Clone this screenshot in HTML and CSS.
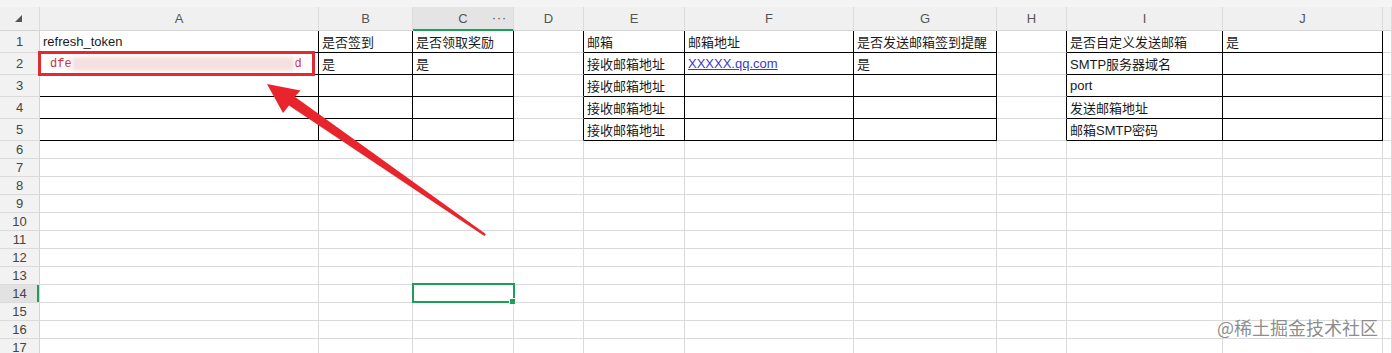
FILE: index.html
```html
<!DOCTYPE html>
<html lang="zh-CN">
<head>
  <meta charset="UTF-8">
  <title>sheet</title>
  <link rel="stylesheet" href="styles.css">
</head>
<body>
  <div class="sheet">

    <!-- column letters -->
    <div class="row head">
      <div class="c corner"><span class="tri"></span></div>
      <div class="c">A</div>
      <div class="c">B</div>
      <div class="c sel-col"><span></span><span>C</span><span class="dots">···</span></div>
      <div class="c">D</div>
      <div class="c">E</div>
      <div class="c">F</div>
      <div class="c">G</div>
      <div class="c">H</div>
      <div class="c">I</div>
      <div class="c">J</div>
      <div class="c"></div>
    </div>

    <!-- data rows -->
    <div class="row tall">
      <div class="c n">1</div>
      <div class="c k">refresh_token</div>
      <div class="c k">是否签到</div>
      <div class="c k">是否领取奖励</div>
      <div class="c kr"></div>
      <div class="c k">邮箱</div>
      <div class="c k">邮箱地址</div>
      <div class="c k">是否发送邮箱签到提醒</div>
      <div class="c kr"></div>
      <div class="c k">是否自定义发送邮箱</div>
      <div class="c k">是</div>
      <div class="c"></div>
    </div>
    <div class="row tall">
      <div class="c n">2</div>
      <div class="c k token">
        <span>dfe</span><span class="blur"></span><span>d</span>
        <div class="mark"></div>
      </div>
      <div class="c k">是</div>
      <div class="c k">是</div>
      <div class="c kr"></div>
      <div class="c k">接收邮箱地址</div>
      <div class="c k"><a class="link">XXXXX.qq.com</a></div>
      <div class="c k">是</div>
      <div class="c kr"></div>
      <div class="c k">SMTP服务器域名</div>
      <div class="c k"></div>
      <div class="c"></div>
    </div>
    <div class="row tall">
      <div class="c n">3</div>
      <div class="c k"></div>
      <div class="c k"></div>
      <div class="c k"></div>
      <div class="c kr"></div>
      <div class="c k">接收邮箱地址</div>
      <div class="c k"></div>
      <div class="c k"></div>
      <div class="c kr"></div>
      <div class="c k">port</div>
      <div class="c k"></div>
      <div class="c"></div>
    </div>
    <div class="row tall">
      <div class="c n">4</div>
      <div class="c k"></div>
      <div class="c k"></div>
      <div class="c k"></div>
      <div class="c kr"></div>
      <div class="c k">接收邮箱地址</div>
      <div class="c k"></div>
      <div class="c k"></div>
      <div class="c kr"></div>
      <div class="c k">发送邮箱地址</div>
      <div class="c k"></div>
      <div class="c"></div>
    </div>
    <div class="row tall">
      <div class="c n">5</div>
      <div class="c k"></div>
      <div class="c k"></div>
      <div class="c k"></div>
      <div class="c kr"></div>
      <div class="c k">接收邮箱地址</div>
      <div class="c k"></div>
      <div class="c k"></div>
      <div class="c kr"></div>
      <div class="c k">邮箱SMTP密码</div>
      <div class="c k"></div>
      <div class="c"></div>
    </div>

    <!-- empty rows -->
    <div class="row"><div class="c n">6</div><div class="c"></div><div class="c"></div><div class="c"></div><div class="c"></div><div class="c"></div><div class="c"></div><div class="c"></div><div class="c"></div><div class="c"></div><div class="c"></div><div class="c"></div></div>
    <div class="row"><div class="c n">7</div><div class="c"></div><div class="c"></div><div class="c"></div><div class="c"></div><div class="c"></div><div class="c"></div><div class="c"></div><div class="c"></div><div class="c"></div><div class="c"></div><div class="c"></div></div>
    <div class="row"><div class="c n">8</div><div class="c"></div><div class="c"></div><div class="c"></div><div class="c"></div><div class="c"></div><div class="c"></div><div class="c"></div><div class="c"></div><div class="c"></div><div class="c"></div><div class="c"></div></div>
    <div class="row"><div class="c n">9</div><div class="c"></div><div class="c"></div><div class="c"></div><div class="c"></div><div class="c"></div><div class="c"></div><div class="c"></div><div class="c"></div><div class="c"></div><div class="c"></div><div class="c"></div></div>
    <div class="row"><div class="c n">10</div><div class="c"></div><div class="c"></div><div class="c"></div><div class="c"></div><div class="c"></div><div class="c"></div><div class="c"></div><div class="c"></div><div class="c"></div><div class="c"></div><div class="c"></div></div>
    <div class="row"><div class="c n">11</div><div class="c"></div><div class="c"></div><div class="c"></div><div class="c"></div><div class="c"></div><div class="c"></div><div class="c"></div><div class="c"></div><div class="c"></div><div class="c"></div><div class="c"></div></div>
    <div class="row"><div class="c n">12</div><div class="c"></div><div class="c"></div><div class="c"></div><div class="c"></div><div class="c"></div><div class="c"></div><div class="c"></div><div class="c"></div><div class="c"></div><div class="c"></div><div class="c"></div></div>
    <div class="row"><div class="c n">13</div><div class="c"></div><div class="c"></div><div class="c"></div><div class="c"></div><div class="c"></div><div class="c"></div><div class="c"></div><div class="c"></div><div class="c"></div><div class="c"></div><div class="c"></div></div>
    <div class="row"><div class="c n sel-row">14</div><div class="c"></div><div class="c"></div><div class="c active"><div class="handle"></div></div><div class="c"></div><div class="c"></div><div class="c"></div><div class="c"></div><div class="c"></div><div class="c"></div><div class="c"></div><div class="c"></div></div>
    <div class="row"><div class="c n">15</div><div class="c"></div><div class="c"></div><div class="c"></div><div class="c"></div><div class="c"></div><div class="c"></div><div class="c"></div><div class="c"></div><div class="c"></div><div class="c"></div><div class="c"></div></div>
    <div class="row"><div class="c n">16</div><div class="c"></div><div class="c"></div><div class="c"></div><div class="c"></div><div class="c"></div><div class="c"></div><div class="c"></div><div class="c"></div><div class="c"></div><div class="c"></div><div class="c"></div></div>
    <div class="row"><div class="c n">17</div><div class="c"></div><div class="c"></div><div class="c"></div><div class="c"></div><div class="c"></div><div class="c"></div><div class="c"></div><div class="c"></div><div class="c"></div><div class="c"></div><div class="c"></div></div>

    <!-- annotation arrow -->
    <svg class="arrow" width="1392" height="353" viewBox="0 0 1392 353">
      <polygon fill="#e8252d" points="267,84 283,113 289,105.5 484.3,236 485.8,234 294.8,96.8 300.5,90.5"/>
    </svg>

    <div class="watermark">@稀土掘金技术社区</div>
  </div>
</body>
</html>
```

FILE: styles.css
```css
/* Base */
body {
  margin: 0;
  background: #f4f4f4;
  font-family: 'Liberation Sans', 'Noto Sans CJK SC', sans-serif;
  font-size: 13px;
  color: #1a1a1a;
  overflow: hidden;
}

.sheet {
  position: relative;
  padding-top: 7px;
  height: 353px;
  box-sizing: border-box;
  overflow: hidden;
}

/* Grid */
.row {
  display: grid;
  grid-template-columns: 40px 279px 94px 101px 70px 101px 169px 143px 70px 156px 160px 9px;
  height: 18px;
}

.row.tall {
  height: 22px;
}

.row.head {
  height: 24px;
}

.c {
  box-sizing: border-box;
  border-right: 1px solid #dadada;
  border-bottom: 1px solid #dadada;
  background: #fff;
  padding: 0 3px;
  white-space: nowrap;
  overflow: hidden;
  display: flex;
  align-items: center;
}

/* black table borders */
.c.k {
  border-right-color: #000;
  border-bottom-color: #000;
}

.c.kr {
  border-right-color: #000;
}

/* Column header */
.head .c {
  background: #f0f0f0;
  border-right-color: #dcdcdc;
  border-bottom-color: #d4d4d4;
  justify-content: center;
  color: #555;
  padding: 0;
}

.head .corner {
  justify-content: flex-start;
  align-items: flex-start;
}

.tri {
  margin: 8px 0 0 15px;
  width: 0;
  height: 0;
  border-left: 7px solid transparent;
  border-bottom: 7px solid #555;
}

.head .sel-col {
  display: grid;
  grid-template-columns: 1fr auto 1fr;
  align-items: center;
  background: #e4e4e4;
  border-bottom: 2px solid #1e9f58;
}

.dots {
  justify-self: end;
  margin-right: 6px;
  font-size: 12px;
  color: #444;
  letter-spacing: 1px;
}

/* Row header */
.c.n {
  background: #f2f2f2;
  border-right-color: #d4d4d4;
  justify-content: center;
  color: #444;
  padding: 0;
}

.c.sel-row {
  background: #e2e2e2;
  box-shadow: inset -2px 0 0 #1e9f58;
}

/* Cells */
.link {
  color: #3939d0;
  text-decoration: underline;
}

.token {
  position: relative;
  overflow: visible;
  padding-left: 10px;
  font-family: 'Liberation Mono', monospace;
  font-size: 12px;
  color: #d02a3c;
}

.blur {
  display: inline-block;
  width: 222px;
  height: 14px;
  margin: 0 1px 0 0;
  background: #f5dfe0;
  filter: blur(2px);
}

.mark {
  position: absolute;
  left: -2px;
  top: -2px;
  width: 277px;
  height: 25px;
  box-sizing: border-box;
  border: 3px solid #e22a30;
}

/* Active cell */
.c.active {
  position: relative;
  overflow: visible;
}

.c.active::before {
  content: '';
  position: absolute;
  left: -1px;
  top: -2px;
  width: 103px;
  height: 20px;
  box-sizing: border-box;
  border: 2px solid #1e9f58;
}

.handle {
  position: absolute;
  right: -3px;
  bottom: -3px;
  width: 5px;
  height: 5px;
  background: #1e9f58;
  border: 1px solid #fff;
}

/* Overlays */
.arrow {
  position: absolute;
  left: 0;
  top: 0;
  pointer-events: none;
}

.watermark {
  position: absolute;
  left: 1217px;
  top: 318px;
  font-family: 'Noto Sans CJK SC', sans-serif;
  font-size: 18px;
  line-height: 18px;
  color: rgba(110, 110, 110, 0.8);
  text-shadow: 0 0 1px #fff;
}
```
